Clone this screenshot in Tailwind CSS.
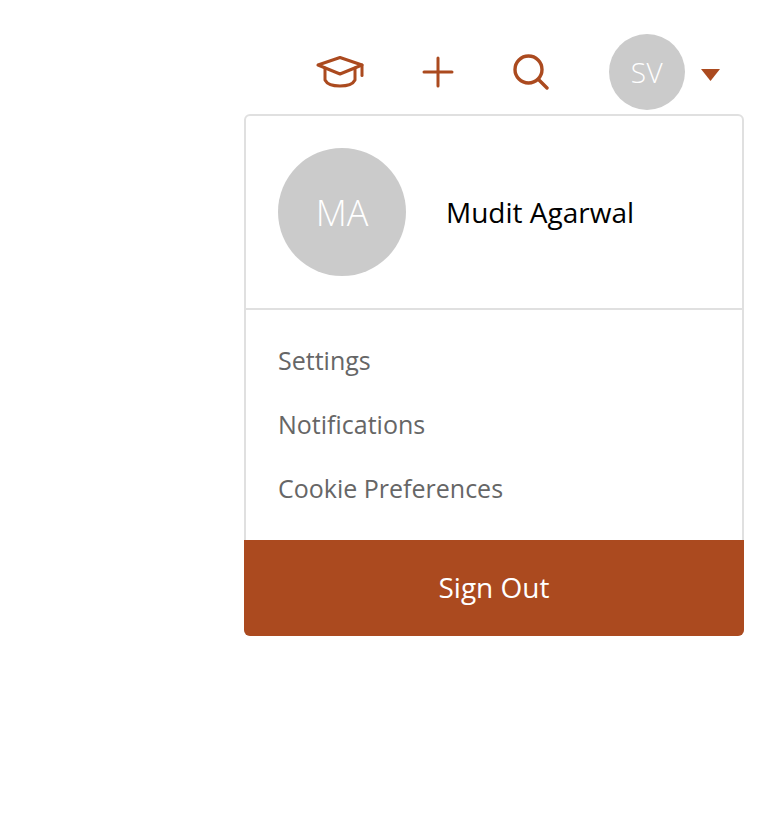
<!DOCTYPE html>
<html>
<head>
<meta charset="utf-8">
<script src="https://cdn.jsdelivr.net/npm/@tailwindcss/browser@4"></script>
</head>
<body class="bg-white font-['Open_Sans',sans-serif]">
<div class="w-[760px] h-[840px] pt-[34px] overflow-hidden">
  <header class="flex items-center justify-end h-[76px] pr-[40px]">
    <svg class="w-[48px] h-[32px] mr-[58px] text-[#ab4a1f]" viewBox="0 0 48 32" fill="none" stroke="currentColor" stroke-width="3" stroke-linecap="round" stroke-linejoin="round">
      <path d="M2 9 L24 1.5 L46 9 L24 18 Z"/>
      <path d="M9 12 V24 C13 32 35 32 39 24 V12"/>
      <path d="M46 9 V19.5"/>
    </svg>
    <svg class="w-[32px] h-[32px] mr-[59px] text-[#ab4a1f]" viewBox="0 0 32 32" fill="none" stroke="currentColor" stroke-width="3" stroke-linecap="round">
      <path d="M16 2 V30 M2 16 H30"/>
    </svg>
    <svg class="w-[36px] h-[36px] mr-[60px] text-[#ab4a1f]" viewBox="0 0 36 36" fill="none" stroke="currentColor" stroke-width="3.4" stroke-linecap="round">
      <circle cx="15.5" cy="15.5" r="13.5"/>
      <path d="M25.5 25.5 L34 34"/>
    </svg>
    <div class="w-[76px] h-[76px] rounded-full bg-[#cbcbcb] flex items-center justify-center text-white text-[28px] font-[350] tracking-[0.5px]">SV</div>
    <svg class="ml-[16px] mt-[6px] w-[19px] h-[12px] text-[#ab4a1f]" viewBox="0 0 19 12" fill="currentColor"><path d="M0 0 H19 L9.5 12 Z"/></svg>
  </header>
  <div class="ml-[244px] mt-[4px] w-[500px] h-[522px] rounded-[6px] border-2 border-[#e0e0e0] flex flex-col">
    <div class="h-[194px] flex items-center pl-[32px] border-b-2 border-[#e0e0e0]">
      <div class="w-[128px] h-[128px] rounded-full bg-[#cbcbcb] flex items-center justify-center text-white text-[36px] font-[350] pt-[2px]">MA</div>
      <div class="ml-[40px] text-[28px] text-black">Mudit Agarwal</div>
    </div>
    <nav class="flex-1 flex flex-col pl-[32px] pt-[19px] text-[25px] text-[#666666]">
      <a class="h-[64px] flex items-center">Settings</a>
      <a class="h-[64px] flex items-center">Notifications</a>
      <a class="h-[64px] flex items-center">Cookie Preferences</a>
    </nav>
    <button class="-mx-[2px] -mb-[2px] h-[96px] pb-[2px] rounded-b-[6px] bg-[#ab4a1f] text-white text-[28px] flex items-center justify-center">Sign Out</button>
  </div>
</div>
</body>
</html>
